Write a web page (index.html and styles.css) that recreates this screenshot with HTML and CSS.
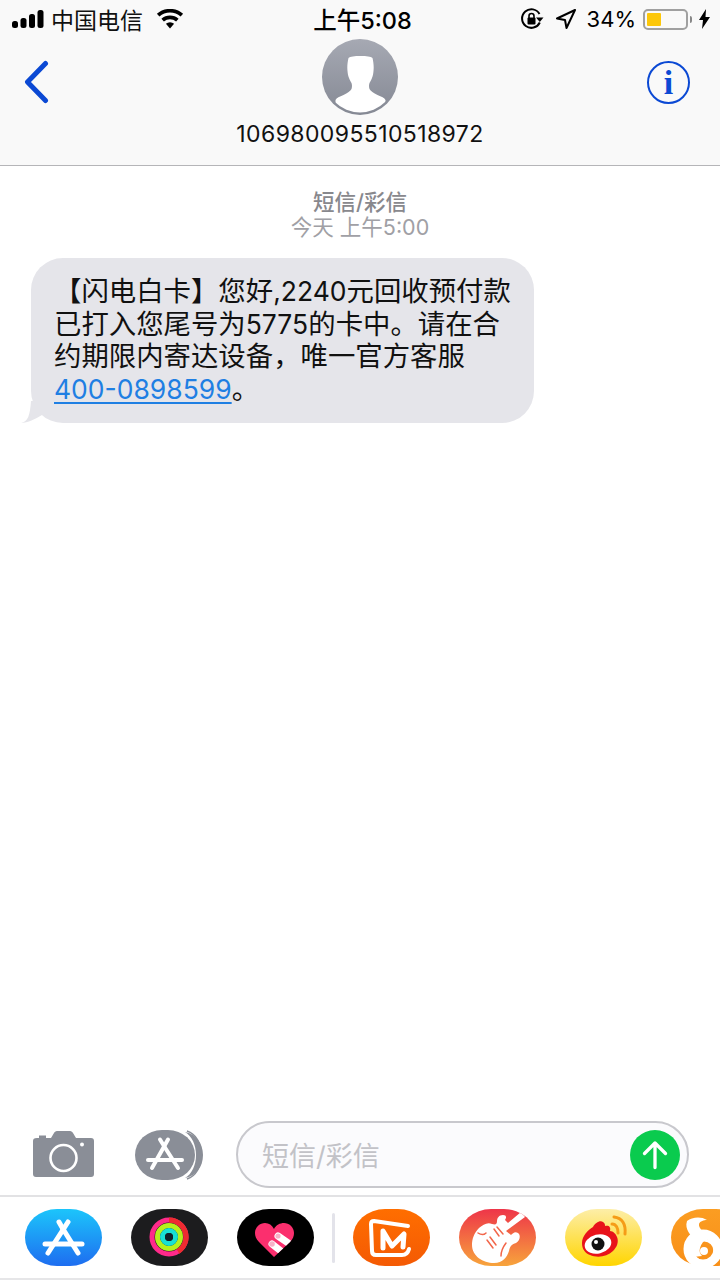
FILE: index.html
```html
<!DOCTYPE html>
<html lang="zh-CN">
<head>
<meta charset="utf-8">
<title>短信/彩信</title>
<link rel="stylesheet" href="styles.css">
</head>
<body>
<div class="screen">
  <header class="head">
    <div class="status">
      <div class="status-side">
        <svg class="signal" width="32" height="20" viewBox="0 0 32 20"><rect x="0" y="12" width="6" height="7" rx="2.5"/><rect x="8.5" y="9" width="6" height="10" rx="2.5"/><rect x="17" y="5" width="6" height="14" rx="2.5"/><rect x="25.5" y="1" width="6" height="18" rx="2.5"/></svg>
        <span class="carrier">中国电信</span>
        <svg class="wifi" width="28" height="20" viewBox="0 0 28 20"><path d="M14 19.5 9.9 14.8a6 6 0 0 1 8.2 0z"/><path d="M7.9 12.6 5.4 9.8a13 13 0 0 1 17.2 0l-2.5 2.8a9.3 9.3 0 0 0-12.2 0z"/><path d="M3.4 7.6.9 4.8a19.800 19.800 0 0 1 26.200 0l-2.500 2.800a16 16 0 0 0-21.200 0z"/></svg>
      </div>
      <div class="time">上午5:08</div>
      <div class="status-side status-right">
        <svg class="rot" width="24" height="24" viewBox="0 0 24 24"><path d="M19.800 15.500A9.300 9.300 0 1 1 19.500 7" fill="none" stroke="#000" stroke-width="2"/><path d="M23.500 10.500h-7.500l3.800 4.500z"/><rect x="7.500" y="10.500" width="8" height="7" rx="1"/><path d="M9 11V9a2.500 2.500 0 0 1 5 0v2" fill="none" stroke="#000" stroke-width="1.600"/></svg>
        <svg class="loc" width="20" height="20" viewBox="0 0 20 20"><path d="M19 1 1 9.500l8 1.500 1.500 8z" fill="none" stroke="#000" stroke-width="2" stroke-linejoin="round"/></svg>
        <span class="batt-text">34%</span>
        <span class="battery"><span class="battery-fill"></span></span>
        <span class="battery-nub"></span>
        <svg class="bolt" width="11" height="20" viewBox="0 0 11 20"><path d="M7 0 0 11h4l-1 9 8-12H6.500z"/></svg>
      </div>
    </div>
    <div class="nav">
      <svg class="back" width="26" height="44" viewBox="0 0 26 44"><path d="M22.500 3.500 4.500 22 22.500 40.500" fill="none" stroke="#0b49d4" stroke-width="5" stroke-linecap="round" stroke-linejoin="round"/></svg>
      <div class="contact">
        <svg class="avatar" width="76" height="76" viewBox="0 0 76 76">
          <defs><linearGradient id="av" x1="0" y1="0" x2="0" y2="1"><stop offset="0" stop-color="#a6a9b3"/><stop offset="1" stop-color="#858994"/></linearGradient>
          <clipPath id="avc"><circle cx="38" cy="38" r="35.500"/></clipPath></defs>
          <circle cx="38" cy="38" r="38" fill="url(#av)"/>
          <path clip-path="url(#avc)" fill="#fff" d="M38 17c-5 0-10 .5-11.500 2-1 4-1.500 9-1 13 .2 2 .5 5 1.500 7 .6 2 1.500 3 2.500 5 .7 2 .6 4 0 6-1 2-4 4-8 6-4 1.500-7 3-8 5v18h50V61c-1-2-4-3.500-8-5-4-2-7-4-8-6-.6-2-.7-4 0-6 1-2 1.900-3 2.500-5 1-2 1.300-5 1.500-7 .5-4 0-9-1-13-1.500-1.500-6.500-2-11.500-2z"/>
        </svg>
        <div class="number">106980095510518972</div>
      </div>
      <div class="info"><span class="info-i">i</span></div>
    </div>
  </header>

  <main class="thread">
    <div class="meta">
      <div class="meta-type">短信/彩信</div>
      <div class="meta-time">今天 上午5:00</div>
    </div>
    <div class="bubble">
      <svg class="tail" width="30" height="22" viewBox="0 0 30 22"><path d="M0 22C7 21 9 14 10 0H30V14H21C14 18 7 22 0 22z" fill="#e5e5ea"/></svg>
      <div class="line">【闪电白卡】您好<span class="num">,2240</span>元回收预付款</div>
      <div class="line">已打入您尾号为<span class="num">5775</span>的卡中。请在合</div>
      <div class="line">约期限内寄达设备，唯一官方客服</div>
      <div class="line"><a class="num link" href="#">400-0898599</a>。</div>
    </div>
  </main>

  <section class="composer">
    <svg class="camera" width="62" height="47" viewBox="0 0 62 47">
      <path fill="#8a8e97" d="M4 7h2V4.500h7V7h5l3-5c.6-1 1.500-2 3-2h13c1.500 0 2.400 1 3 2l3 5h15c2 0 3 1 3 3v33c0 2-1 3-3 3H3c-2 0-3-1-3-3V10c0-2 1-3 4-3z"/>
      <circle cx="30.500" cy="27" r="13" fill="none" stroke="#fff" stroke-width="2.600"/>
      <circle cx="49" cy="13.500" r="2" fill="#fff"/>
    </svg>
    <svg class="apps" width="70" height="52" viewBox="0 0 70 52">
      <path d="M52 2c9 3 14 12 14 24s-5 21-14 24" fill="none" stroke="#8a8e97" stroke-width="1.500"/>
      <path d="M50 3c11 2 18 11 18 23s-7 21-18 23c7-4 11-13 11-23S57 7 50 3z" fill="#8a8e97"/>
      <rect x="0" y="1" width="60" height="50" rx="27" ry="25" fill="#8a8e97"/>
      <g fill="none" stroke="#fff" stroke-width="4" stroke-linecap="round"><path d="M25 10.500l4 6.500"/><path d="M33 10.500 17 39"/><path d="M29 17l14 22"/><path d="M13 31h34"/></g>
    </svg>
    <div class="field">
      <span class="placeholder">短信/彩信</span>
      <span class="send"><svg width="28" height="30" viewBox="0 0 28 30"><path d="M14 27.500V3M3.500 13.500 14 3l10.500 10.500" fill="none" stroke="#fff" stroke-width="3.300" stroke-linecap="round" stroke-linejoin="round"/></svg></span>
    </div>
  </section>

  <nav class="dock">
    <svg class="app" width="77" height="57" viewBox="0 0 77 57">
      <defs><linearGradient id="g1" x1="0" y1="0" x2="0" y2="1"><stop offset="0" stop-color="#1cc5fb"/><stop offset="1" stop-color="#1e6df0"/></linearGradient></defs>
      <rect width="77" height="57" rx="32" ry="28.500" fill="url(#g1)"/>
      <g fill="none" stroke="#fff" stroke-width="5" stroke-linecap="round"><path d="M34 13l4 7"/><path d="M43 13 23 44"/><path d="M38 20l15 24"/><path d="M20 35h37"/></g>
    </svg>
    <svg class="app" width="77" height="57" viewBox="0 0 77 57">
      <rect width="77" height="57" rx="32" ry="28.500" fill="#1c1c1e"/>
      <g fill="none" stroke-width="5"><circle cx="38" cy="28" r="17" stroke="#ff2a8a"/><path d="M38 11a17 17 0 0 1 9 31.500" stroke="#ee2b30"/><circle cx="38" cy="28" r="11.500" stroke="#b6f01c"/><circle cx="38" cy="28" r="6.500" stroke="#18e0d4"/></g>
      <circle cx="38" cy="28" r="4" fill="#10222a"/>
    </svg>
    <svg class="app" width="77" height="57" viewBox="0 0 77 57">
      <defs><clipPath id="hc"><path d="M37 48 22 33c-3-3-4-6-4-9 0-6 5-10 10-10 4 0 7 2 9 6 2-4 6-6 10-6 5 0 10 4 10 10 0 3-1 6-4 9z"/></clipPath></defs>
      <rect width="77" height="57" rx="32" ry="28.500" fill="#000"/>
      <path fill="#fb2f6e" d="M37 48 22 33c-3-3-4-6-4-9 0-6 5-10 10-10 4 0 7 2 9 6 2-4 6-6 10-6 5 0 10 4 10 10 0 3-1 6-4 9z"/>
      <g clip-path="url(#hc)" fill="none" stroke="#fff" stroke-width="7" stroke-linecap="round"><path d="M41 27 60 40"/><path d="M35 35 54 50"/></g>
      <circle cx="41" cy="27" r="2.600" fill="#f7b1c8"/><circle cx="35" cy="35" r="2.800" fill="#f7b1c8"/>
    </svg>
    <span class="dock-sep"></span>
    <svg class="app" width="77" height="57" viewBox="0 0 77 57">
      <defs><linearGradient id="g4" x1="0" y1="0" x2="0" y2="1"><stop offset="0" stop-color="#ff6e00"/><stop offset="1" stop-color="#f45a04"/></linearGradient></defs>
      <rect width="77" height="57" rx="32" ry="28.500" fill="url(#g4)"/>
      <g fill="none" stroke="#fff" stroke-linecap="round" stroke-linejoin="round">
        <path stroke-width="4" d="M55 17 21 12c-2 0-3 1-3 3l1 27c0 2 1 4 4 4h26c4 0 6-2 7-6"/>
        <path stroke-width="5" d="M30 39V22l9 15 12-12-1 13"/>
      </g>
    </svg>
    <svg class="app" width="77" height="57" viewBox="0 0 77 57">
      <defs><linearGradient id="g5" x1="0" y1="0" x2="0" y2="1"><stop offset="0" stop-color="#ee3549"/><stop offset="1" stop-color="#f7a43c"/></linearGradient>
      <clipPath id="c5"><rect width="77" height="57" rx="32" ry="28.500"/></clipPath></defs>
      <rect width="77" height="57" rx="32" ry="28.500" fill="url(#g5)"/>
      <g clip-path="url(#c5)">
        <path fill="#fff" d="M44 6C40 6 38 9 38 12C38 15 37 16 33 15C28 13 24 16 20 19C15 24 13 30 13 36C13 47 24 54 35 54C44 54 48 48 50 42C51 37 53 35 57 34C61 32 62 26 59 24C56 22 54 24 52 26L47 22L66 8L62 3L49 14L46 11C48 8 47 6 44 6Z"/>
        <g fill="none" stroke="#f2664a" stroke-width="1.500" stroke-linecap="round"><path d="M19 24c3 2 6 2 8 0"/><path d="M31 28l6 8"/><path d="M28 31l6 8"/><path d="M38 18l6 7"/><path d="M35 20l5 7"/><path d="M47 34c-3 4-5 8-5 13"/></g>
      </g>
    </svg>
    <svg class="app" width="77" height="57" viewBox="0 0 77 57">
      <defs><linearGradient id="g6" x1="0" y1="0" x2="0" y2="1"><stop offset="0" stop-color="#fdeea8"/><stop offset="1" stop-color="#ffd500"/></linearGradient></defs>
      <rect width="77" height="57" rx="32" ry="28.500" fill="url(#g6)"/>
      <path fill="#e8121a" d="M17 34c0-7 6-13 11-16 2-4 7-7 10-5 2 1 2 3 2 4 4-1 6 1 5 5 3 0 6 3 7 6 2 5 0 10-4 14-6 6-16 7-23 4-5-2-8-6-8-12z"/>
      <ellipse cx="33" cy="35" rx="13.500" ry="9.500" fill="#fff" transform="rotate(-14 33 35)"/>
      <circle cx="33" cy="35" r="6.500" fill="#111"/><circle cx="31" cy="33" r="2" fill="#fff"/>
      <g fill="none" stroke="#f59c17" stroke-width="3" stroke-linecap="round"><path d="M49 8c8 1 12 7 11 17"/><path d="M47 15c4 0 6 4 6 9"/></g>
    </svg>
    <svg class="app" width="77" height="57" viewBox="0 0 77 57">
      <defs><linearGradient id="g7" x1="0" y1="0" x2="0" y2="1"><stop offset="0" stop-color="#fb9d22"/><stop offset="1" stop-color="#f88f18"/></linearGradient></defs>
      <rect width="77" height="57" rx="32" ry="28.500" fill="url(#g7)"/>
      <path fill="#fff" d="M16 12c5-4 14-5 20-1-3 0-7 1-8 4-1 5 7 9 9 14-4 2-7 6-8 10-1 3 0 6 2 8l-9 1c-4-5-2-11 1-16-2-6-10-11-7-20z"/>
      <circle cx="32" cy="40" r="15" fill="none" stroke="#fff" stroke-width="9"/>
      <circle cx="33" cy="42" r="11" fill="none" stroke="#fff" stroke-width="3"/>
      <circle cx="33" cy="42" r="4" fill="#fff"/>
    </svg>
  </nav>
</div>
</body>
</html>
```

FILE: styles.css
```css
* { box-sizing: border-box; }
html, body { margin: 0; padding: 0; background: #fff; }
body { font-family: Inter, "Noto Sans CJK SC", sans-serif; color: #000; }
.screen { width: 720px; height: 1280px; display: flex; flex-direction: column; overflow: hidden; }

.head { height: 166px; background: #f9f9f9; border-bottom: 1px solid #b5b5b8; display: flex; flex-direction: column; flex: none; }
.status { height: 38px; display: grid; grid-template-columns: 1fr auto 1fr; align-items: center; padding: 0 10px 0 12px; flex: none; }
.status-side { display: flex; align-items: center; }
.status-right { justify-content: flex-end; }
.carrier { font-size: 23px; margin-left: 7px; color: #111; }
.wifi { margin-left: 13px; }
.time { font-size: 23.5px; font-weight: 500; margin-left: 3px; }
.rot { margin-right: 12px; }
.loc { margin-right: 11px; }
.batt-text { font-size: 22px; margin-right: 7px; }
.battery { width: 45px; height: 21px; border: 2px solid #a0a0a0; border-radius: 5px; padding: 2px; display: flex; }
.battery-fill { width: 14px; background: #fcc70a; border-radius: 1px; }
.battery-nub { width: 2px; height: 7px; background: #888; margin: 0 7px 0 2px; border-radius: 0 2px 2px 0; }

.nav { flex: 1; display: grid; grid-template-columns: 1fr auto 1fr; padding: 1px 30px 0 30px; }
.back { margin: 21px 0 0 -7px; }
.contact { display: flex; flex-direction: column; align-items: center; }
.avatar { display: block; }
.number { font-size: 23px; letter-spacing: .4px; margin-top: 5px; white-space: nowrap; color: #111; }
.info { justify-self: end; width: 43px; height: 43px; margin-top: 22px; border: 2px solid #0b49d4; border-radius: 50%; display: flex; align-items: center; justify-content: center; }
.info-i { font-family: "Liberation Serif", serif; font-weight: 700; font-size: 34px; line-height: 1; color: #0b49d4; }

.thread { flex: 1; min-height: 0; padding-top: 24px; }
.meta { text-align: center; font-size: 21.500px; line-height: 25px; }
.meta-type { font-weight: 500; color: #88888d; }
.meta-time { color: #a0a0a5; }
.bubble { position: relative; width: 503px; height: 165px; margin: 18px 0 0 31px; background: #e5e5ea; border-radius: 32px; padding: 17px 0 0 23px; font-size: 27.400px; line-height: 33px; color: #111; }
.tail { position: absolute; left: -10px; bottom: 0; }
.line { white-space: nowrap; height: 32.700px; }
.num { font-size: 26.500px; }
.link { color: #1f7fe3; text-decoration: underline; text-underline-offset: 3px; }

.composer { height: 83px; flex: none; display: flex; align-items: center; padding: 0 31px 0 33px; border-bottom: 2px solid #e2e2e4; }
.camera { flex: none; }
.apps { flex: none; margin-left: 40px; }
.field { margin-left: 31px; flex: 1; height: 67px; border: 2px solid #c8c8cd; border-radius: 34px; background: #fbfbfd; display: flex; align-items: center; justify-content: space-between; padding: 0 7px 0 24px; }
.placeholder { font-size: 27px; color: #c2c2c7; }
.send { width: 50px; height: 50px; border-radius: 50%; background: #0acb4e; display: flex; align-items: center; justify-content: center; }

.dock { height: 83px; flex: none; display: flex; align-items: flex-start; gap: 29px; padding: 12px 0 0 25px; overflow: hidden; border-bottom: 2px solid #e6e6e8; }
.app { flex: none; display: block; }
.dock-sep { flex: none; width: 3px; height: 50px; margin: 4px -11px 0 -11px; background: #e3e3ea; border-radius: 2px; }
```
